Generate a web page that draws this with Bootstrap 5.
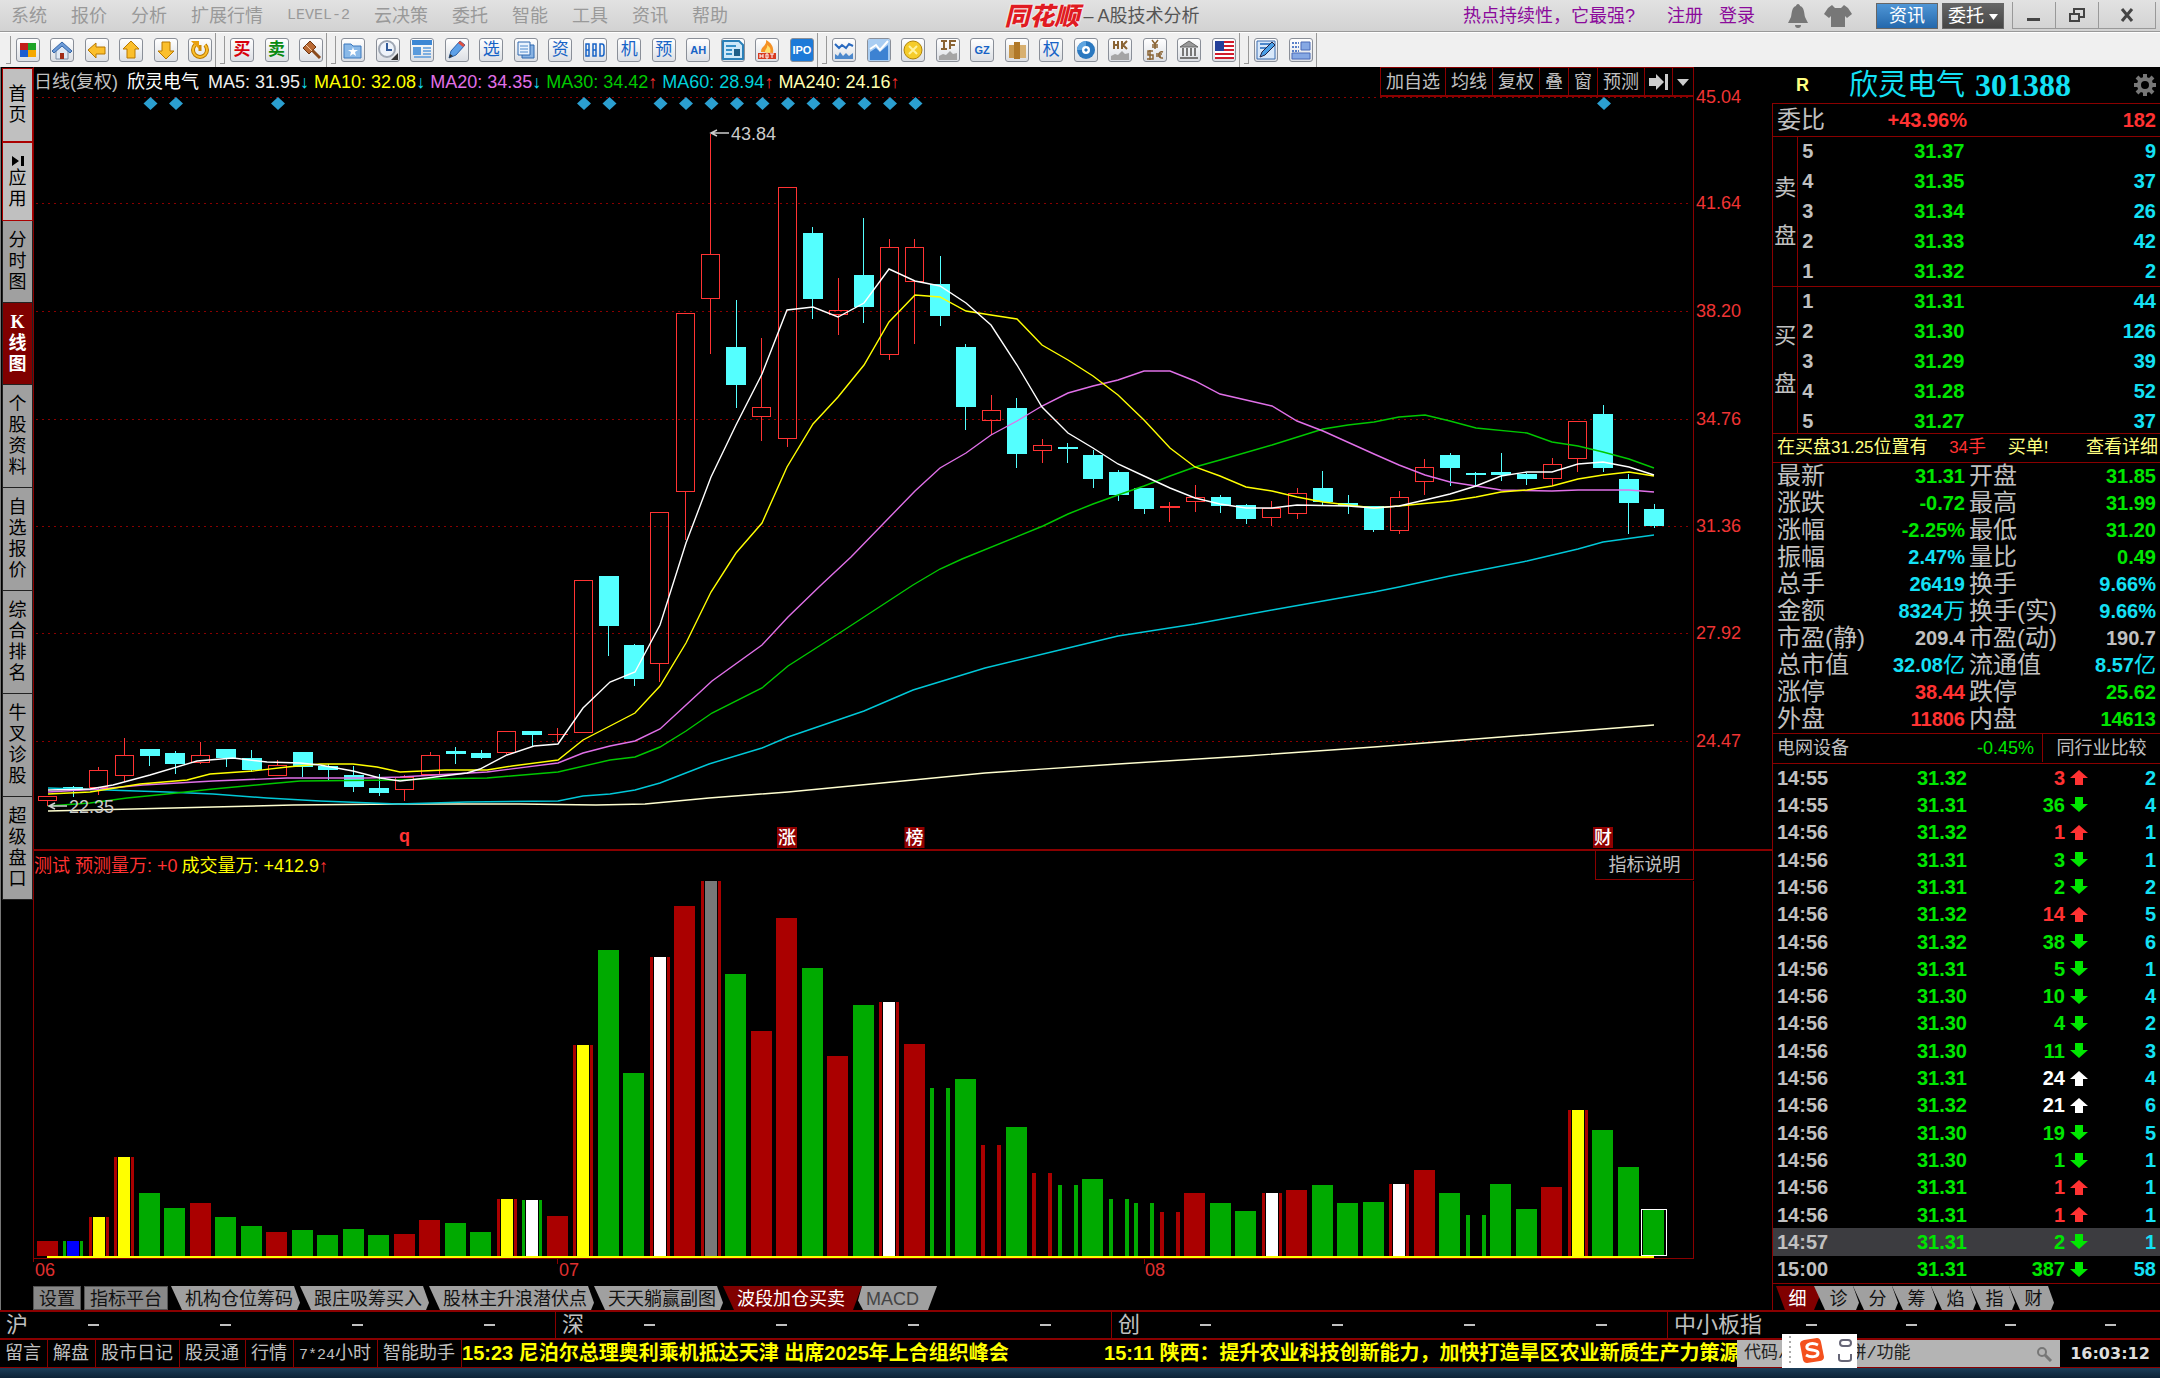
<!DOCTYPE html>
<html lang="zh-CN">
<head>
<meta charset="utf-8">
<meta name="viewport" content="width=device-width, initial-scale=1">
<title>同花顺 - A股技术分析</title>
<link rel="stylesheet" href="https://cdn.jsdelivr.net/npm/bootstrap@5.3.0/dist/css/bootstrap.min.css">
<style>
:root{--line:#8a0000;--up:#ff3232;--down:#00e600;--aqua:#14e1f5;--soft:#c0c0c0;--lemon:#ffff80}
body{background:#000;color:var(--soft);font:18px/24px "Liberation Sans","Noto Sans CJK SC",sans-serif;min-height:100vh}
button{font:inherit;color:inherit;background:none;border:0;padding:0;white-space:nowrap}
a{text-decoration:none;color:inherit}
svg{display:block}
.up{color:var(--up)}.down{color:var(--down)}.aqua{color:var(--aqua)}.soft{color:var(--soft)}
/* title bar */
.titlebar{height:32px;background:linear-gradient(#e2e2e2,#d2d2d2);border-bottom:1px solid #999;color:#999;white-space:nowrap}
.menus{gap:24px;padding-left:11px;flex:0 0 46.5%}
.mono15{font-family:"Liberation Mono",monospace;font-size:15px}
.apptitle{color:#555}
.brandmark{color:#e01b22;font-weight:900;font-style:italic;font-size:25px;line-height:24px;text-shadow:0 0 2px #fff,0 0 2px #fff}
.tools-right{flex:1 1 0;color:#8b0a9b}
.bell{margin:0 16px 0 33px}
.tbtn{width:62px;height:26px;color:#fff;line-height:24px;border:1px solid #666}
.tbtn-blue{background:linear-gradient(#4f96d6,#2468ac)}
.tbtn-dark{background:linear-gradient(#666,#444)}
.winbtns{border:1px solid #999;border-top:0;height:27px}
.winbtns button{width:43px;height:26px;border-right:1px solid #999}
.winbtns button:last-child{width:56px;border:0}
/* icon toolbar */
.iconbar{height:35px;background:#f0f0f0;border-top:1px solid #fff;padding-left:2px}
.grip{width:5px;height:28px;border-right:1px solid #999;border-bottom:1px solid #999;margin:0 5px 0 4px}
.grp{height:34px;border-right:1px solid #999;padding-right:3px}
.ico{width:24px;height:24px;border:1px solid #8a8f98;border-radius:3px;background:linear-gradient(#fff,#dcdfe4);overflow:hidden;line-height:22px;text-align:center;font-size:17px;color:#1763c6}
.ico svg{width:22px;height:22px}
.ico-s{font-size:11px;font-weight:700}
.buy-c{color:#d8000c}.sell-c{color:#088a10}.ico-ipo{background:#1d7ad8}
.g1{width:200px}.g2{width:97px}.g3{width:477px}.g4{width:408px}.g5{width:63px}
/* side tabs */
.side{width:33px;padding:1px 1px 0;border-left:1px solid #777}
.side a{display:flex;flex-direction:column;align-items:center;justify-content:center;background:#a0a0a0;color:#000;border:1px solid #222;border-top:0;line-height:21px;width:31px}
.side .s2{height:74px;background:#c0c0c0;border:1px solid #a00}
.side .s2b{height:79px;background:#c0c0c0;border:1px solid #a00}
.side .s3{height:82px}.side .s4{height:103px}
.side .on{background:#800000;color:#fff;font-weight:700}
.serif{font-family:"Liberation Serif",serif}
/* chart */
.framed{border-left:1px solid var(--line)}
.charthead{height:30px;padding-right:78px}
.readout{gap:5px;color:#ddd;white-space:nowrap}
.m5{color:#eee}.m10{color:#ff0}.m20{color:#e070e8}.m30{color:#00c800}.m60{color:#00d0d8}.m240{color:#ffffb0}
.minibtns{border:1px solid var(--line);border-bottom-width:2px;height:30px}
.minibtns button{padding:0 5px;border-left:1px solid var(--line);height:27px}
.minibtns button:first-child{border-left:0}
.minibtns .tiny{padding:0 4px}
.volhead{height:30px;padding-right:78px}
.explain{width:99px;height:29px;border:1px solid var(--line);border-top:0}
.plot{width:100%;height:auto;overflow:visible}
.plot text{font-size:18px}
.tabstrip{height:24px;overflow:hidden}
.boxtab{height:24px;background:#888;color:#111;border:1px solid #555;padding:0 5px;margin-right:3px}
.slant{height:24px;background:#a0a0a0;color:#111;padding:1px 7px 0 14px;clip-path:polygon(0 0,calc(100% - 6px) 0,100% 70%,calc(100% - 3px) 100%,11px 100%)}
.slant.act{background:#800000;color:#fff;padding-right:17px;clip-path:polygon(0 0,100% 0,calc(100% - 9px) 100%,11px 100%)}
.slant.fin{padding-right:18px;margin-left:-4px;padding-left:8px;color:#444;clip-path:polygon(4px 0,100% 0,calc(100% - 9px) 100%,5px 100%,0 60%)}
/* quote panel */
.quote{width:388px;border-left:1px solid var(--line)}
.qhead{height:36px;margin-left:-1px;background:#000}
.rflag{color:var(--lemon);padding:0 40px 0 24px}
.qname{color:var(--aqua);font-size:29px;line-height:34px}
.qcode{color:var(--aqua);font:700 32px/34px "Liberation Serif",serif;margin-left:10px}
.num{font-size:20px;font-weight:700}
.bigtxt{font-size:24px}
.rowline{border-top:1px solid var(--line)}
.quote table{border-collapse:collapse;width:100%;table-layout:fixed}
.quote td,.quote th{padding:0;white-space:nowrap}
.quote th{font-weight:400}
.wb{height:33px}
.wb-diff{width:193px}
.book{height:150px}
.book.buy{height:147px}
.book .lab{width:27px;border-right:1px solid var(--line);font-size:22px;line-height:48px}
.book tr{height:30px}
.book td{line-height:28px;padding-bottom:2px}
.w28{width:28px}.w46{width:46px}.w92{width:92px}.w94{width:94px}.w96{width:96px}.w98{width:98px}.w100px{width:100px}.w104{width:104px}.w120{width:120px}
.tip{height:29px;color:var(--lemon);padding:0 2px 2px 4px;white-space:nowrap}
.tip .nn{font-size:17px}
.stats tr{height:27px}
.stats td,.stats th{line-height:26px;padding-bottom:1px}
.stats th{font-size:24px}
.stats .unit{font-size:22px;font-weight:400;line-height:1}
.sector{height:30px;padding:0 0 2px 4px}
.peer{width:118px;height:28px;border-left:1px solid var(--line)}
.ticks{height:520px;border-top:1px solid var(--line)}
.ticks table{height:519px}
.ticks td{line-height:24px}
.ticks .sel{background:#3c3c40}
.rt{border-top:1px solid var(--line);height:27px;padding:2px 0 0 3px}
.rt .slant{width:45px;padding:1px 0 0 4px;margin-right:-6px;text-align:center;flex:none}
.rt .slant.act{width:48px;padding:1px 5px 0 0;margin-right:-10px;clip-path:polygon(0 0,100% 0,calc(100% - 10px) 100%,9px 100%)}
/* index strip and status */
.indices{height:30px;border-top:2px solid var(--line);border-bottom:2px solid var(--line)}
.idx{width:556px;border-right:1px solid var(--line);font-size:22px;padding-left:6px;white-space:nowrap}
.idx:last-child{flex:1 1 0;border:0}
.idx i{width:11px;height:2px;background:var(--soft)}
.status{height:28px;border-bottom:1px solid var(--line)}
.status .lnk{padding:0 6px 0 5px;border-right:1px solid var(--line);line-height:26px;white-space:nowrap}
.news{flex:1 1 0;min-width:0;overflow:hidden;white-space:nowrap;color:#ff0;font-weight:700;font-size:20px;line-height:27px}
.news .first{width:642px;flex:none}
.finder{width:323px;background:#b4b4b4;position:relative}
.finder input{border:0;background:none;width:100%;height:27px;padding:0 0 0 7px;font:17px/27px "Liberation Mono","Noto Sans CJK SC",monospace;color:#222}
.finder input::placeholder{color:#222;opacity:1}
.finder .lens{position:absolute;right:7px;top:6px}
.ime{position:absolute;left:45px;top:-6px;width:75px;height:34px;background:#fff}
.clock{width:100px;color:#ddd;font:700 16px/27px "DejaVu Sans",sans-serif}
.desk{height:10px;background:linear-gradient(#1b3d58,#0c2236)}
</style>
<script src="https://cdn.jsdelivr.net/npm/bootstrap@5.3.0/dist/js/bootstrap.bundle.min.js"></script>
</head>
<body class="d-flex flex-column m-0">

<header class="titlebar d-flex align-items-center">
  <nav class="menus d-flex align-items-center">
    <a href="#">系统</a><a href="#">报价</a><a href="#">分析</a><a href="#">扩展行情</a><a href="#" class="mono15">LEVEL-2</a><a href="#">云决策</a><a href="#">委托</a><a href="#">智能</a><a href="#">工具</a><a href="#">资讯</a><a href="#">帮助</a>
  </nav>
  <div class="apptitle d-flex align-items-center gap-1"><span class="brandmark">同花顺</span><span>– A股技术分析</span></div>
  <div class="tools-right d-flex align-items-center justify-content-end">
    <a href="#" class="me-3">热点持续性，它最强?</a>
    <a href="#" class="mx-3">注册</a><a href="#">登录</a>
    <svg class="bell" width="20" height="26" viewBox="0 0 20 26"><path d="M10 1c1 0 2 1 2 2 4 1 4 6 5 11l3 6H0l3-6c1-5 1-10 5-11 0-1 1-2 2-2z" fill="#777"/><path d="M7 22h6a3 3 0 0 1-6 0z" fill="#777"/></svg>
    <svg class="me-4" width="28" height="24" viewBox="0 0 28 24"><path d="M8 1l3 3h6l3-3 4 3 4 6-5 4-2-2v11H7V12l-2 2-5-4 4-6z" fill="#777"/></svg>
    <button class="tbtn tbtn-blue">资讯</button>
    <button class="tbtn tbtn-dark ms-1 me-2">委托 <svg class="d-inline-block" width="9" height="6" viewBox="0 0 9 6"><path d="M0 0h9L4.500 6z" fill="#fff"/></svg></button>
    <div class="winbtns d-flex me-1">
      <button aria-label="最小化"><svg class="mx-auto" width="16" height="16"><rect x="1" y="11" width="13" height="3" fill="#444"/></svg></button>
      <button aria-label="还原"><svg class="mx-auto" width="18" height="16" fill="none" stroke="#444" stroke-width="2"><path d="M6 6V2h10v8h-4M2 7h9v7H2z"/></svg></button>
      <button aria-label="关闭"><svg class="mx-auto" width="16" height="16" stroke="#444" stroke-width="3"><path d="M3 2l10 12M13 2L3 14"/></svg></button>
    </div>
  </div>
</header>

<div class="iconbar d-flex align-items-center">
  <span class="grip"></span>
  <div class="grp g1 d-flex align-items-center justify-content-between">
    <button class="ico" aria-label="主页面"><svg viewBox="0 0 22 22"><path d="M3 4h8v7H3z" fill="#c22018"/><path d="M11 4h8v7h-8z" fill="#1fa428"/><path d="M3 11h8v7H3z" fill="#1c5cd0"/><path d="M11 11h8v7h-8z" fill="#f5a800"/></svg></button>
    <button class="ico" aria-label="首页"><svg viewBox="0 0 22 22"><path d="M5 11v9h12v-9l-6-6z" fill="#dfe8f4" stroke="#7b8da6"/><path d="M1 12L11 3l10 9-2 2-8-7-8 7z" fill="#6c9bd8" stroke="#3566a8"/><path d="M9 14h4v6H9z" fill="#a02c18"/></svg></button>
    <button class="ico" aria-label="后退"><svg viewBox="0 0 22 22"><path d="M2 11l8-7v4h9v7h-9v4z" fill="#fbbf2c" stroke="#b87800"/></svg></button>
    <button class="ico" aria-label="上翻"><svg viewBox="0 0 22 22"><path d="M11 2l8 8h-4v9H7v-9H3z" fill="#fbbf2c" stroke="#b87800"/></svg></button>
    <button class="ico" aria-label="下翻"><svg viewBox="0 0 22 22"><path d="M11 20l8-8h-4V3H7v9H3z" fill="#fbbf2c" stroke="#b87800"/></svg></button>
    <button class="ico" aria-label="刷新"><svg viewBox="0 0 22 22" fill="none"><path d="M6 6a7 7 0 1 0 10 0" stroke="#b87800" stroke-width="4"/><path d="M6 6a7 7 0 1 0 10 0" stroke="#fbbf2c" stroke-width="2"/><path d="M11 6v6" stroke="#d08c08" stroke-width="3"/><path d="M2 2h8v8z" fill="#e9a010"/></svg></button>
  </div>
  <span class="grip"></span>
  <div class="grp g2 d-flex align-items-center justify-content-between">
    <button class="ico fw-bold buy-c">买</button>
    <button class="ico fw-bold sell-c">卖</button>
    <button class="ico" aria-label="竞价"><svg viewBox="0 0 22 22"><path d="M3 9l7-7 6 6-7 7z" fill="#b96a35" stroke="#6e3510"/><path d="M12 11l8 8" stroke="#8a4a1c" stroke-width="3"/><path d="M6 6l6 6" stroke="#f3c9a0"/></svg></button>
  </div>
  <span class="grip"></span>
  <div class="grp g3 d-flex align-items-center justify-content-between">
    <button class="ico" aria-label="自选"><svg viewBox="0 0 22 22"><path d="M2 5h7l2 2h8v12H2z" fill="#8ab9e8" stroke="#3a78be"/><path d="M11 8l1 3h4l-3 2 1 4-3-2-3 2 1-4-3-2h4z" fill="#fff"/></svg></button>
    <button class="ico" aria-label="定时"><svg viewBox="0 0 22 22"><circle cx="10" cy="10" r="8" fill="#eef3fa" stroke="#a0a8b4" stroke-width="2"/><path d="M10 4v7h5" stroke="#345c9a" stroke-width="2" fill="none"/><path d="M21 14v7h-7z" fill="#333"/></svg></button>
    <button class="ico" aria-label="资料"><svg viewBox="0 0 22 22"><path d="M1 1h20v5H1z" fill="#3d87d4"/><path d="M2 8h8v8H2z" fill="#5b9bdc"/><path d="M12 9h8M12 12h8M12 15h8M3 18h17" stroke="#5b9bdc" stroke-width="1.500"/></svg></button>
    <button class="ico" aria-label="画线"><svg viewBox="0 0 22 22"><path d="M3 19l2-7L14 2l5 4-9 10z" fill="#5ea1e8" stroke="#2a62a8"/><path d="M14 2l5 4-2 2-5-4z" fill="#e05040"/><path d="M3 19l1-4 3 2z" fill="#333"/></svg></button>
    <button class="ico">选</button>
    <button class="ico" aria-label="报表"><svg viewBox="0 0 22 22"><path d="M7 6h12v13H7z" fill="#88b2e2" stroke="#2e68b0"/><path d="M3 3h12v13H3z" fill="#eaf3fd" stroke="#2e68b0"/><path d="M5 7h8M5 10h8M5 13h8" stroke="#4c88cc"/></svg></button>
    <button class="ico">资</button>
    <button class="ico" aria-label="BBD"><svg viewBox="0 0 22 22" fill="none" stroke="#1763c6" stroke-width="1.500"><path d="M2 5v12h3V5zM2 11h3M9 5v12h3V5zM9 11h3M16 5v12h2q2 0 2-3V8q0-3-2-3z"/></svg></button>
    <button class="ico">机</button>
    <button class="ico">预</button>
    <button class="ico ico-s">AH</button>
    <button class="ico" aria-label="研报"><svg viewBox="0 0 22 22"><path d="M1 2h16l4 4v14H1z" fill="#cfe8f8" stroke="#2a80b8" stroke-width="2"/><path d="M4 7h10M4 11h6M4 15h6" stroke="#3590c8" stroke-width="2"/><path d="M12 10h6v7h-6z" fill="#1f5f88"/></svg></button>
    <button class="ico" aria-label="热点"><svg viewBox="0 0 22 22"><path d="M5 13c0-6 6-6 5-12 6 3 8 8 7 13z" fill="#f59226"/><path d="M9 13c0-3 3-4 2-7 4 3 4 5 3 8z" fill="#ffe070"/><path d="M2 14h18v6H2z" fill="#d83a20"/><path d="M4 15v4M4 17h3M7 15v4M10 15h2v4h-2zM14 15h4M16 15v4" stroke="#fff" fill="none"/></svg></button>
    <button class="ico ico-s ico-ipo text-white">IPO</button>
  </div>
  <span class="grip"></span>
  <div class="grp g4 d-flex align-items-center justify-content-between">
    <button class="ico" aria-label="分时"><svg viewBox="0 0 22 22"><path d="M2 5l4 4 3-3 4 3 3-4 4 2" stroke="#2a6ac0" stroke-width="2" fill="none"/><path d="M2 20v-5l3 2 2-4 3 4 3-3 3 3 4-3v6z" fill="#4c88cc"/></svg></button>
    <button class="ico" aria-label="走势"><svg viewBox="0 0 22 22"><path d="M0 0h22v22H0z" fill="#a9cdf2"/><path d="M2 21v-8l6-4 4 4 8-7v15z" fill="#3d82d2"/><path d="M2 10l6-4 4 5 8-9" stroke="#fff" stroke-width="2" fill="none"/></svg></button>
    <button class="ico" aria-label="黄金"><svg viewBox="0 0 22 22"><circle cx="11" cy="11" r="9" fill="#f5cc2a" stroke="#b08408"/><path d="M7 7l8 8M15 7l-8 8" stroke="#fff3a0" stroke-width="2"/></svg></button>
    <button class="ico" aria-label="期指"><svg viewBox="0 0 22 22"><path d="M4 2h6M7 2v8M4 10h6M13 10V2h6M13 6h5" stroke="#8a6434" stroke-width="2" fill="none"/><path d="M2 21v-4l4-2 3 1 4-4 3 3 4-1v7z" fill="#a5a5a5"/></svg></button>
    <button class="ico ico-s">GZ</button>
    <button class="ico" aria-label="商品"><svg viewBox="0 0 22 22"><path d="M3 6h6v13H3z" fill="#c99a50"/><path d="M8 3h6v17H8z" fill="#b07828"/><path d="M14 6h6v13h-6z" fill="#d8b070"/></svg></button>
    <button class="ico">权</button>
    <button class="ico" aria-label="基金"><svg viewBox="0 0 22 22"><circle cx="11" cy="11" r="9" fill="#2a78c0"/><path d="M2 11a9 9 0 0 1 9-9v5l-4 4z" fill="#5fa5e0"/><circle cx="11" cy="11" r="4" fill="#fff"/><path d="M11 9l2 2-2 2-2-2z" fill="#2a78c0"/></svg></button>
    <button class="ico" aria-label="港股"><svg viewBox="0 0 22 22"><path d="M5 2v8M5 6h4M9 2v8M13 2v8M18 2l-4 4 4 4" stroke="#8a6434" stroke-width="2" fill="none"/><path d="M2 21v-4l4-2 3 1 4-4 3 3 4-1v7z" fill="#a5a5a5"/></svg></button>
    <button class="ico" aria-label="外汇"><svg viewBox="0 0 22 22" fill="none" stroke="#8a6434" stroke-width="1.500"><path d="M8 1l3 4 3-4M11 5v5M8 6h6M8 8h6M9 12H4v4h5v4H3M6 11v10M19 13c-5-2-6 7 0 6M12 15h6M12 17h5"/></svg></button>
    <button class="ico" aria-label="银行"><svg viewBox="0 0 22 22"><path d="M11 2l9 6H2z" fill="#999" stroke="#666"/><path d="M5 9v8M9 9v8M13 9v8M17 9v8M2 19h18" stroke="#777" stroke-width="2"/></svg></button>
    <button class="ico" aria-label="美股"><svg viewBox="0 0 22 22"><path d="M2 2h19v18H2z" fill="#fff"/><path d="M2 3h19M2 7h19M2 11h19M2 15h19M2 19h19" stroke="#d01c2c" stroke-width="2"/><path d="M2 2h9v10H2z" fill="#24409a"/></svg></button>
  </div>
  <span class="grip"></span>
  <div class="grp g5 d-flex align-items-center justify-content-between">
    <button class="ico" aria-label="编辑"><svg viewBox="0 0 22 22"><path d="M2 2h18v18H2z" fill="#d8e8fa" stroke="#3a6cb0"/><path d="M5 5h10M5 9h6" stroke="#4c88cc" stroke-width="2"/><path d="M5 18l2-5L17 3l3 3L10 16z" fill="#4aa0e8" stroke="#224"/></svg></button>
    <button class="ico" aria-label="版面"><svg viewBox="0 0 22 22"><path d="M2 4h7M2 8h7M2 12h7" stroke="#5a80c8" stroke-width="2" stroke-dasharray="2 1"/><path d="M11 3h9v8h-9zM2 14h18v6H2z" fill="#86a8e4" stroke="#4a6ab8"/></svg></button>
  </div>
</div>

<main class="d-flex flex-grow-1">
  <nav class="side flex-shrink-0" aria-label="功能">
    <a href="#" class="s2"><span>首</span><span>页</span></a>
    <a href="#" class="s2b"><svg width="12" height="14" viewBox="0 0 12 14"><path d="M0 2l7 5-7 5zM9 2h3v10H9z"/></svg><span>应</span><span>用</span></a>
    <a href="#" class="s3"><span>分</span><span>时</span><span>图</span></a>
    <a href="#" class="s3 on"><span class="serif">K</span><span>线</span><span>图</span></a>
    <a href="#" class="s4"><span>个</span><span>股</span><span>资</span><span>料</span></a>
    <a href="#" class="s4"><span>自</span><span>选</span><span>报</span><span>价</span></a>
    <a href="#" class="s4"><span>综</span><span>合</span><span>排</span><span>名</span></a>
    <a href="#" class="s4"><span>牛</span><span>叉</span><span>诊</span><span>股</span></a>
    <a href="#" class="s4"><span>超</span><span>级</span><span>盘</span><span>口</span></a>
  </nav>

  <section class="flex-grow-1 d-flex flex-column overflow-hidden">
    <div class="framed">
      <div class="charthead d-flex justify-content-between">
        <div class="readout d-flex align-items-center">
          <span class="soft">日线(复权)</span><span class="mx-1 text-white">欣灵电气</span>
          <span class="m5">MA5: 31.95<span class="aqua">↓</span></span>
          <span class="m10">MA10: 32.08<span class="aqua">↓</span></span>
          <span class="m20">MA20: 34.35<span class="aqua">↓</span></span>
          <span class="m30">MA30: 34.42<span class="up">↑</span></span>
          <span class="m60">MA60: 28.94<span class="up">↑</span></span>
          <span class="m240">MA240: 24.16<span class="up">↑</span></span>
        </div>
        <div class="minibtns d-flex">
          <button>加自选</button><button>均线</button><button>复权</button><button>叠</button><button>窗</button><button>预测</button>
          <button class="tiny" aria-label="跳到最后"><svg width="19" height="18" viewBox="0 0 19 18" fill="#ccc"><path d="M0 5h7V1l8 8-8 8v-4H0zM16 1h3v16h-3z"/></svg></button>
          <button class="tiny" aria-label="更多"><svg width="12" height="8" viewBox="0 0 12 8" fill="#ccc"><path d="M0 1h12L6 8z"/></svg></button>
        </div>
      </div>
      <svg id="price" class="plot" viewBox="34 97 1738 754"></svg>
      <div class="volhead d-flex justify-content-between">
        <div class="d-flex align-items-center gap-1"><span class="up">测试 预测量万: +0</span><span class="m10">成交量万: +412.9<span class="up">↑</span></span></div>
        <button class="explain">指标说明</button>
      </div>
    </div>
    <svg id="volume" class="plot" viewBox="33 881 1739 405"></svg>
    <div class="tabstrip d-flex">
      <button class="boxtab">设置</button><button class="boxtab">指标平台</button>
      <button class="slant">机构仓位筹码</button><button class="slant">跟庄吸筹买入</button><button class="slant">股林主升浪潜伏点</button><button class="slant">天天躺赢副图</button><button class="slant act">波段加仓买卖</button><button class="slant fin">MACD</button>
    </div>
  </section>

  <aside class="quote flex-shrink-0">
    <div class="qhead d-flex align-items-center">
      <b class="rflag">R</b>
      <span class="qname">欣灵电气</span><span class="qcode">301388</span>
      <button class="ms-auto me-1" aria-label="设置"><svg width="22" height="22" viewBox="-11 -11 22 22"><circle r="6" fill="none" stroke="#777" stroke-width="4"/><path d="M0-11V-7M0 11V7M-11 0H-7M11 0H7M-8-8L-5-5M8 8L5 5M-8 8L-5 5M8-8L5-5" stroke="#777" stroke-width="4"/></svg></button>
    </div>
    <div class="wb rowline d-flex align-items-center">
      <span class="bigtxt ps-1">委比</span>
      <span class="num up flex-grow-1 text-end">+43.96%</span><span class="num up text-end pe-1 wb-diff">182</span>
    </div>
    <div class="book rowline d-flex"><div class="lab d-flex flex-column justify-content-center text-center"><span>卖</span><span>盘</span></div><table id="asks" class="num"></table></div>
    <div class="book buy rowline d-flex"><div class="lab d-flex flex-column justify-content-center text-center"><span>买</span><span>盘</span></div><table id="bids" class="num"></table></div>
    <div class="tip rowline d-flex align-items-center justify-content-between"><span>在买盘<span class="nn">31.25</span>位置有</span><span class="up"><span class="nn">34</span>手</span><span>买单<span class="nn">!</span></span><a href="#" class="ms-3">查看详细</a></div>
    <div class="rowline ps-1"><table id="stats" class="stats"></table></div>
    <div class="sector rowline d-flex align-items-center"><span class="flex-grow-1">电网设备</span><span class="down pe-2">-0.45%</span><button class="peer">同行业比较</button></div>
    <div class="ticks"><table id="ticks" class="num"></table></div>
    <div class="rt d-flex">
      <button class="slant act">细</button><button class="slant">诊</button><button class="slant">分</button><button class="slant">筹</button><button class="slant">焰</button><button class="slant">指</button><button class="slant">财</button>
    </div>
  </aside>
</main>

<div class="indices d-flex">
  <div class="idx d-flex align-items-center">沪<div class="d-flex flex-grow-1 justify-content-around"><i></i><i></i><i></i><i></i></div></div>
  <div class="idx d-flex align-items-center">深<div class="d-flex flex-grow-1 justify-content-around"><i></i><i></i><i></i><i></i></div></div>
  <div class="idx d-flex align-items-center">创<div class="d-flex flex-grow-1 justify-content-around"><i></i><i></i><i></i><i></i></div></div>
  <div class="idx d-flex align-items-center">中小板指<div class="d-flex flex-grow-1 justify-content-around"><i></i><i></i><i></i><i></i></div></div>
</div>

<footer class="status d-flex">
  <a href="#" class="lnk">留言</a><a href="#" class="lnk">解盘</a><a href="#" class="lnk">股市日记</a><a href="#" class="lnk">股灵通</a><a href="#" class="lnk">行情</a><a href="#" class="lnk"><span class="mono15">7*24</span>小时</a><a href="#" class="lnk">智能助手</a>
  <div class="news d-flex"><span class="first">15:23 尼泊尔总理奥利乘机抵达天津 出席2025年上合组织峰会</span><span>15:11 陕西：提升农业科技创新能力，加快打造旱区农业新质生产力策源地</span></div>
  <div class="finder">
    <label for="find" class="visually-hidden">代码/名称/简拼/功能</label><input id="find" type="text" placeholder="代码/名称/简拼/功能">
    <svg class="lens" width="17" height="16" viewBox="0 0 17 16" fill="none" stroke="#777" stroke-width="2"><circle cx="6" cy="6" r="4"/><path d="M9 9l6 6" stroke-width="3"/></svg>
    <div class="ime" aria-hidden="true"><svg width="75" height="34" viewBox="0 0 75 34"><path d="M8 2v30" stroke="#aaa" stroke-width="2" stroke-dasharray="2 3"/><path d="M22 6q-4 1-4 4l3 16q1 3 4 3l13-2q4-1 4-4L39 8q-1-4-4-4z" fill="#f4511e"/><path d="M36 11c-6-3-12-1-11 3 1 3 11 1 11 5 0 4-7 5-12 2" fill="none" stroke="#fff" stroke-width="3"/><rect x="58" y="6" width="11" height="6" rx="3" fill="none" stroke="#667" stroke-width="2"/><path d="M57 20v5q0 2 3 2h6q3 0 3-2v-5" fill="none" stroke="#667" stroke-width="2"/></svg></div>
  </div>
  <div class="clock text-center">16:03:12</div>
</footer>
<div class="desk"></div>

<script>
const X = i => 47.5 + 25.5 * i;
const CY = '#54ffff', RD = '#ff3333';
/* candles: direction, body top, body bottom, high, low */
const candles = [
['r',796,801,796,806],['c',787,789,786,797],['r',770,788,767,795],['r',755,776,738,781],['c',749,756,749,766],['c',753,764,751,774],['r',755,763,742,764],['c',749,758,749,767],
['c',758,770,750,772],['r',765,776,760,776],['c',752,767,752,777],['c',766,770,764,780],['c',775,787,766,792],['c',788,793,774,796],['r',777,790,775,801],['r',755,775,752,775],
['c',751,754,747,764],['c',753,758,750,759],['r',731,753,731,754],['c',731,735,731,747],['r',734,735,728,742],['r',580,733,580,733],['c',576,626,576,656],['c',645,679,644,686],
['r',512,664,512,682],['r',313,492,313,540],['r',254,299,134,354],['c',347,385,300,408],['r',407,417,338,441],['r',187,439,187,447],['c',233,299,227,319],['r',310,315,278,335],
['c',275,307,218,323],['r',247,355,239,360],['r',247,282,239,344],['c',284,316,256,326],['c',347,407,344,430],['r',410,421,395,435],['c',408,454,398,468],['r',445,451,439,463],
['c',447,449,443,463],['c',455,479,450,488],['c',472,495,470,501],['c',488,509,488,514],['r',506,508,502,522],['r',497,502,485,512],['c',497,506,495,513],['c',505,519,504,524],
['r',508,518,501,526],['r',493,514,488,519],['c',488,502,471,506],['c',503,506,495,514],['c',506,530,506,532],['r',497,531,491,534],['r',467,482,459,495],['c',455,468,453,486],
['c',473,475,472,486],['c',472,475,453,481],['c',474,479,473,485],['r',464,479,458,485],['r',421,459,421,472],['c',414,468,405,472],['c',479,503,474,534],['c',509,526,504,528]];
const averages = {
'#ffffd0':'48,811 133,809 213,807 293,805 398,804 520,804 596,805 645,804 709,798 788,792 913,780 985,773 1118,764 1246,756 1374,747 1501,737 1578,731 1654,725',
'#00c8d8':'48,788 107,790 167,792 213,794 267,798 320,801 398,804 467,802 558,801 583,796 610,794 635,790 660,783 709,764 762,748 788,737 864,711 913,690 985,668 1068,648 1118,636 1195,624 1272,610 1374,592 1399,587 1450,576 1476,571 1527,561 1578,549 1603,542 1654,535',
'#00c800':'48,806 90,803 127,798 167,794 213,789 267,784 300,781 398,780 427,779 487,778 558,772 610,760 635,757 660,747 686,731 712,713 762,688 788,666 838,634 887,602 913,585 940,569 962,559 1043,526 1068,514 1093,504 1118,495 1144,486 1170,476 1195,467 1220,460 1272,445 1323,429 1348,425 1374,422 1399,417 1425,415 1450,421 1476,428 1527,433 1552,442 1578,446 1603,452 1629,459 1654,468',
'#e070e8':'48,792 100,789 143,785 213,781 287,778 367,778 400,777 487,772 558,763 583,753 610,746 635,741 660,729 686,705 712,681 762,645 788,617 820,586 851,557 915,491 940,468 966,453 991,435 1017,421 1042,406 1068,393 1093,386 1118,380 1144,371 1170,371 1195,381 1220,394 1246,400 1272,406 1297,421 1323,431 1374,454 1399,465 1425,475 1450,482 1476,486 1501,490 1552,491 1578,490 1629,490 1654,492',
'#ffff00':'48,794 90,792 140,784 187,780 210,774 253,771 287,767 320,764 353,764 377,767 400,772 445,770 487,770 512,766 558,760 583,740 610,726 635,713 660,686 686,643 711,592 736,553 762,523 787,467 813,424 838,397 864,365 889,322 915,295 940,297 966,311 991,315 1017,319 1042,345 1068,360 1093,376 1118,395 1144,420 1170,448 1195,467 1220,476 1246,487 1272,491 1297,497 1323,502 1374,508 1399,506 1450,501 1476,497 1501,492 1527,490 1552,486 1578,479 1603,475 1629,472 1654,476',
'#ffffff':'48,790 90,789 113,785 150,775 197,761 233,758 267,762 300,763 320,765 353,771 380,778 400,781 427,778 467,773 480,769 507,755 534,746 558,744 583,708 610,682 635,672 660,625 686,543 711,477 736,425 762,374 787,310 813,307 838,317 864,303 889,269 915,281 940,286 966,303 991,325 1017,365 1042,407 1068,433 1093,448 1118,464 1144,476 1170,488 1195,498 1220,504 1246,508 1272,508 1297,505 1348,506 1374,508 1399,506 1425,500 1450,494 1476,486 1501,476 1527,472 1552,472 1578,464 1603,462 1629,467 1654,475'};
let s = '<g shape-rendering="crispEdges">';
const scale = [['45.04',97],['41.64',203],['38.20',311],['34.76',419],['31.36',526],['27.92',633],['24.47',741]];
for (const [, y] of scale) s += `<path d="M36 ${y+.5}H1692" stroke="#8a0000" stroke-dasharray="2 4"/>`;
s += '<path d="M1693.5 97V851" stroke="#8a0000"/><path d="M34 850H1772" stroke="#8a0000" stroke-width="2"/>';
candles.forEach(([k,t,b,h,l], i) => {
  const x = X(i), w = Math.floor(x), c = k === 'r' ? RD : CY;
  if (t > h) s += `<rect x="${w}" y="${h}" width="1" height="${t-h}" fill="${c}"/>`;
  if (l > b) s += `<rect x="${w}" y="${b}" width="1" height="${l-b}" fill="${c}"/>`;
  s += k === 'r' && b - t > 3 ? `<rect x="${x-9}" y="${t+.5}" width="18" height="${b-t-1}" fill="none" stroke="${c}"/>`
    : `<rect x="${x-10}" y="${t}" width="20" height="${b-t}" fill="${c}"/>`;
});
s += '</g>';
for (const c in averages) s += `<polyline points="${averages[c]}" fill="none" stroke="${c}" stroke-width="1.4"/>`;
for (const i of [4,5,9,21,22,24,25,26,27,28,29,30,31,32,33,34,61]) s += `<path d="M${X(i)+1} 97l7 6.500-7 6.500-7-6.500z" fill="#2b9fd0"/>`;
for (const [v, y] of scale) s += `<text x="1696" y="${y+6}" fill="#f03434">${v}</text>`;
s += '<g stroke="#ccc" fill="none" stroke-width="1.500"><path d="M711 133h18M717 130l-6 3 6 3"/><path d="M49 806h18M55 803l-6 3 6 3"/></g>';
s += '<text x="731" y="140" fill="#ccc">43.84</text><text x="69" y="813" fill="#ccc">22.35</text><text x="399" y="842" fill="#ff3333" font-weight="700">q</text>';
for (const [i, t] of [[29,'涨'],[34,'榜'],[61,'财']]) s += `<rect x="${X(i)-10}" y="827" width="20" height="21" fill="#900000"/><text x="${X(i)-9}" y="844" fill="#fff" font-weight="500">${t}</text>`;
document.getElementById('price').innerHTML = s;

/* volume: fill kind and bar top. R/G solid, r/g two thin posts, others a strip between sides */
const vol = 'R1241 B1241 Y1217 Y1157 G1193 G1208 R1203 G1217 G1226 R1232 G1230 G1235 G1229 G1235 R1234 R1220 G1223 G1232 Y1199 V1200 R1216 Y1045 G950 G1073 W957 R906 A881 G974 R1031 R918 G968 R1056 G1005 W1002 R1044 g1088 G1079 r1145 G1127 r1173 g1185 G1179 g1199 g1203 r1212 R1193 G1203 G1211 W1193 R1190 G1185 G1203 G1202 W1184 R1170 G1193 g1215 G1184 G1209 R1187 Y1110 G1130 G1167 G1209'.split(' ');
const strip = {B:'#0000ff',Y:'#ffff00',V:'#ffffff',W:'#ffffff',A:'#787878'};
let v = '<g shape-rendering="crispEdges"><path d="M33.500 881V1262M1693.500 881V1258M33 1258.500H1694M557.500 1258V1264M1144.500 1258V1264" stroke="#8a0000"/>';
vol.forEach((e, i) => {
  const k = e[0], t = +e.slice(1), x = Math.round(X(i)), h = 1256 - t, side = 'GgVB'.includes(k) ? '#00aa00' : '#aa0000', w = k === 'r' || k === 'g' ? 4 : 3;
  if (k === 'R' || k === 'G') v += `<rect x="${x-11}" y="${t}" width="21" height="${h}" fill="${side}"/>`;
  else v += `<rect x="${x-10}" y="${t}" width="${w}" height="${h}" fill="${side}"/><rect x="${x+10-w}" y="${t}" width="${w}" height="${h}" fill="${side}"/>`;
  if (strip[k]) v += `<rect x="${x-6}" y="${t}" width="12" height="${h}" fill="${strip[k]}"/>`;
});
v += `<rect x="${X(63)-13}" y="1209.500" width="25" height="46" fill="none" stroke="#fff"/><path d="M47 1256.500H1654" stroke="#ffff00" stroke-width="2"/></g>`;
v += '<g fill="#e03030"><text x="35" y="1276">06</text><text x="559" y="1276">07</text><text x="1145" y="1276">08</text></g>';
document.getElementById('volume').innerHTML = v;

const level = ([n, p, q]) => `<tr><td class="soft ps-1 w46">${n}</td><td class="down text-end w120">${p}</td><td class="aqua text-end pe-1">${q}</td></tr>`;
document.getElementById('asks').innerHTML = [[5,'31.37',9],[4,'31.35',37],[3,'31.34',26],[2,'31.33',42],[1,'31.32',2]].map(level).join('');
document.getElementById('bids').innerHTML = [[1,'31.31',44],[2,'31.30',126],[3,'31.29',39],[4,'31.28',52],[5,'31.27',37]].map(level).join('');

const unit = t => t.replace(/[万亿]/, m => `<span class="unit">${m}</span>`);
document.getElementById('stats').innerHTML = [
['最新','31.31','down','开盘','31.85','down'],['涨跌','-0.72','down','最高','31.99','down'],['涨幅','-2.25%','down','最低','31.20','down'],['振幅','2.47%','aqua','量比','0.49','down'],
['总手','26419','aqua','换手','9.66%','aqua'],['金额','8324万','aqua','换手(实)','9.66%','aqua'],['市盈(静)','209.4','soft','市盈(动)','190.7','soft'],['总市值','32.08亿','aqua','流通值','8.57亿','aqua'],
['涨停','38.44','up','跌停','25.62','down'],['外盘','11806','up','内盘','14613','down']]
.map(r => `<tr><th scope="row" class="w96">${r[0]}</th><td class="num ${r[2]} text-end w92">${unit(r[1])}</td><th scope="row" class="ps-1 w104">${r[3]}</th><td class="num ${r[5]} text-end pe-1">${unit(r[4])}</td></tr>`).join('');

const arrow = (up, c) => `<svg class="mx-auto" width="18" height="17" viewBox="0 0 18 17"><path d="${up ? 'M9 1l9 8h-5v7H5V9H0z' : 'M9 16l9-8h-5V1H5v7H0z'}" fill="${c}"/></svg>`;
document.getElementById('ticks').innerHTML = `14:55 31.32 3 u 2
14:55 31.31 36 d 4
14:56 31.32 1 u 1
14:56 31.31 3 d 1
14:56 31.31 2 d 2
14:56 31.32 14 u 5
14:56 31.32 38 d 6
14:56 31.31 5 d 1
14:56 31.30 10 d 4
14:56 31.30 4 d 2
14:56 31.30 11 d 3
14:56 31.31 24 w 4
14:56 31.32 21 w 6
14:56 31.30 19 d 5
14:56 31.30 1 d 1
14:56 31.31 1 u 1
14:56 31.31 1 u 1
14:57 31.31 2 d 1
15:00 31.31 387 d 58`.split('\n').map(l => {
  const [t, p, q, k, n] = l.split(' '), c = {u:'#ff3232',d:'#00e600',w:'#ffffff'}[k];
  return `<tr${t === '14:57' ? ' class="sel"' : ''}><td class="soft ps-1 w94">${t}</td><td class="down text-end w100px">${p}</td><td class="text-end w98" style="color:${c}">${q}</td><td class="w28">${arrow(k !== 'd', c)}</td><td class="aqua text-end pe-1">${n}</td></tr>`;
}).join('');
</script>
</body>
</html>
